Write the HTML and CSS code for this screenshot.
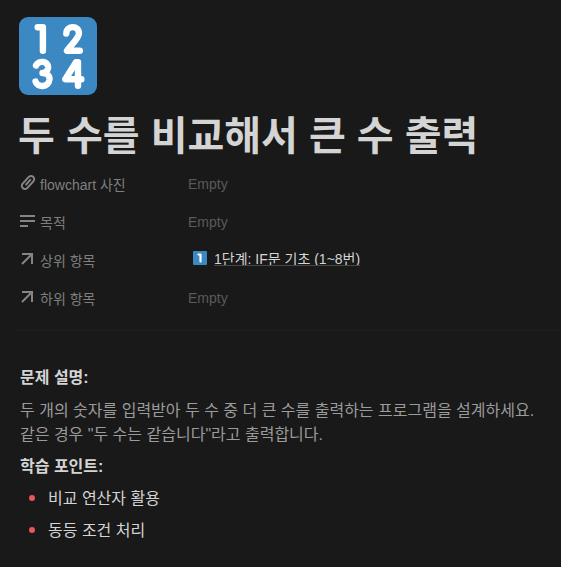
FILE: index.html
```
<!DOCTYPE html>
<html lang="ko">
<head>
<meta charset="utf-8">
<title>두 수를 비교해서 큰 수 출력</title>
<link rel="stylesheet" href="styles.css">
</head>
<body>
<main class="page">
  <svg class="page-icon" viewBox="0 0 78 78" aria-hidden="true">
    <rect width="78" height="78" rx="9" fill="#3b88c3"/>
    <g fill="none" stroke="#fff" stroke-width="6.400" stroke-linecap="round" stroke-linejoin="round">
      <path d="M18.700 10.300H23.900V33.700"/>
      <path d="M47.300 16.500C47.600 8 60 8 59.900 16.500C59.600 22 52 27.500 48 33.800H60.800"/>
      <path d="M17 48.500C19 43.200 29.500 43.500 29.200 50.500C28.800 54.500 26 56 23.500 56C28 56 30.800 58.500 30.500 62.500C29.500 71 18 70.500 16.500 64.500"/>
      <path d="M59 68.800V45.300H57L46.300 62.300H62.400"/>
    </g>
  </svg>
  <h1 class="title">두 수를 비교해서 큰 수 출력</h1>
  <dl class="properties">
    <div class="property">
      <dt class="label">
        <svg class="icon" viewBox="0 0 16 16" aria-hidden="true"><g class="line clip"><rect x="-3.200" y="-7.600" width="6.400" height="15.200" rx="3.200" transform="translate(8 7.500) rotate(42)"/><path d="M6.200 9.500L10.300 4.900"/></g></svg>
        <span>flowchart 사진</span>
      </dt>
      <dd class="value">Empty</dd>
    </div>
    <div class="property">
      <dt class="label">
        <svg class="icon" viewBox="0 0 16 16" aria-hidden="true"><path d="M0 3H15M0 8H15M0 13H8" class="line"/></svg>
        <span>목적</span>
      </dt>
      <dd class="value">Empty</dd>
    </div>
    <div class="property">
      <dt class="label">
        <svg class="icon" viewBox="0 0 16 16" aria-hidden="true"><path d="M2 3H12V13M12 3L2 13" class="line"/></svg>
        <span>상위 항목</span>
      </dt>
      <dd class="value relation">
        <svg class="badge" viewBox="0 0 14 14" aria-hidden="true"><rect width="14" height="14" rx="1" fill="#3b88c3"/><path d="M5.500 3.500H7.500V10.500" fill="none" stroke="#fff" stroke-width="2.200" stroke-linecap="round" stroke-linejoin="round"/></svg>
        <a class="link" href="#">1단계: IF문 기초 (1~8번)</a>
      </dd>
    </div>
    <div class="property">
      <dt class="label">
        <svg class="icon" viewBox="0 0 16 16" aria-hidden="true"><path d="M2 3H12V13M12 3L2 13" class="line"/></svg>
        <span>하위 항목</span>
      </dt>
      <dd class="value">Empty</dd>
    </div>
  </dl>
  <hr class="divider">
  <section class="content">
    <h2 class="heading">문제 설명:</h2>
    <p class="text">두 개의 숫자를 입력받아 두 수 중 더 큰 수를 출력하는 프로그램을 설계하세요. 같은 경우 "두 수는 같습니다"라고 출력합니다.</p>
    <h2 class="heading">학습 포인트:</h2>
    <ul class="list">
      <li>비교 연산자 활용</li>
      <li>동등 조건 처리</li>
    </ul>
  </section>
</main>
</body>
</html>
```
FILE: styles.css
```
* {
  box-sizing: border-box;
}

body {
  margin: 0;
  background: #191919;
  color: #d4d4d4;
  font-family: "Liberation Sans", "Noto Sans CJK KR", sans-serif;
  font-size: 16px;
  line-height: 24px;
}

.page {
  padding: 17px 0 20px 18px;
}

.page-icon {
  display: block;
  width: 78px;
  height: 78px;
  margin-left: 1px;
}

.title {
  margin: 17px 0 6px;
  font-size: 40px;
  line-height: 48px;
}

.properties {
  margin: 0;
  font-size: 14px;
}

.property {
  display: flex;
  align-items: center;
  height: 38px;
}

.label {
  display: flex;
  flex: 0 0 170px;
  align-items: center;
  gap: 4px;
  padding-left: 2px;
  color: #7f7f7f;
}

.icon {
  width: 16px;
  height: 16px;
  margin-bottom: 4px;
}

.line {
  fill: none;
  stroke: #858585;
  stroke-width: 2;
}

.clip {
  stroke-linecap: round;
}

.value {
  margin: 0;
  padding-bottom: 2px;
  color: #5a5a5a;
}

.relation {
  display: flex;
  align-items: center;
  gap: 7px;
  padding: 0 0 6px 5px;
}

.badge {
  width: 14px;
  height: 14px;
}

.link {
  overflow: hidden;
  height: 16px;
  border-bottom: 1px solid #484848;
  color: #d4d4d4;
  line-height: 18px;
  text-decoration: none;
}

.divider {
  height: 1px;
  margin: 12px 0 35px;
  border: 0;
  background: #1f1f1f;
}

.content {
  padding: 0 20px 0 2px;
}

.heading {
  margin: 0 0 8px;
  font-size: 16px;
  line-height: 24px;
}

.text {
  margin: 0 0 8px;
  padding-top: 1px;
  color: #9b9b9b;
}

.list {
  display: grid;
  gap: 8px;
  margin: 0;
  padding: 0;
  list-style: none;
}

.list li {
  display: flex;
  align-items: center;
  gap: 13px;
  padding-left: 9px;
}

.list li::before {
  width: 6px;
  height: 6px;
  margin-bottom: 3px;
  border-radius: 50%;
  background: #eb5757;
  content: "";
}
```
